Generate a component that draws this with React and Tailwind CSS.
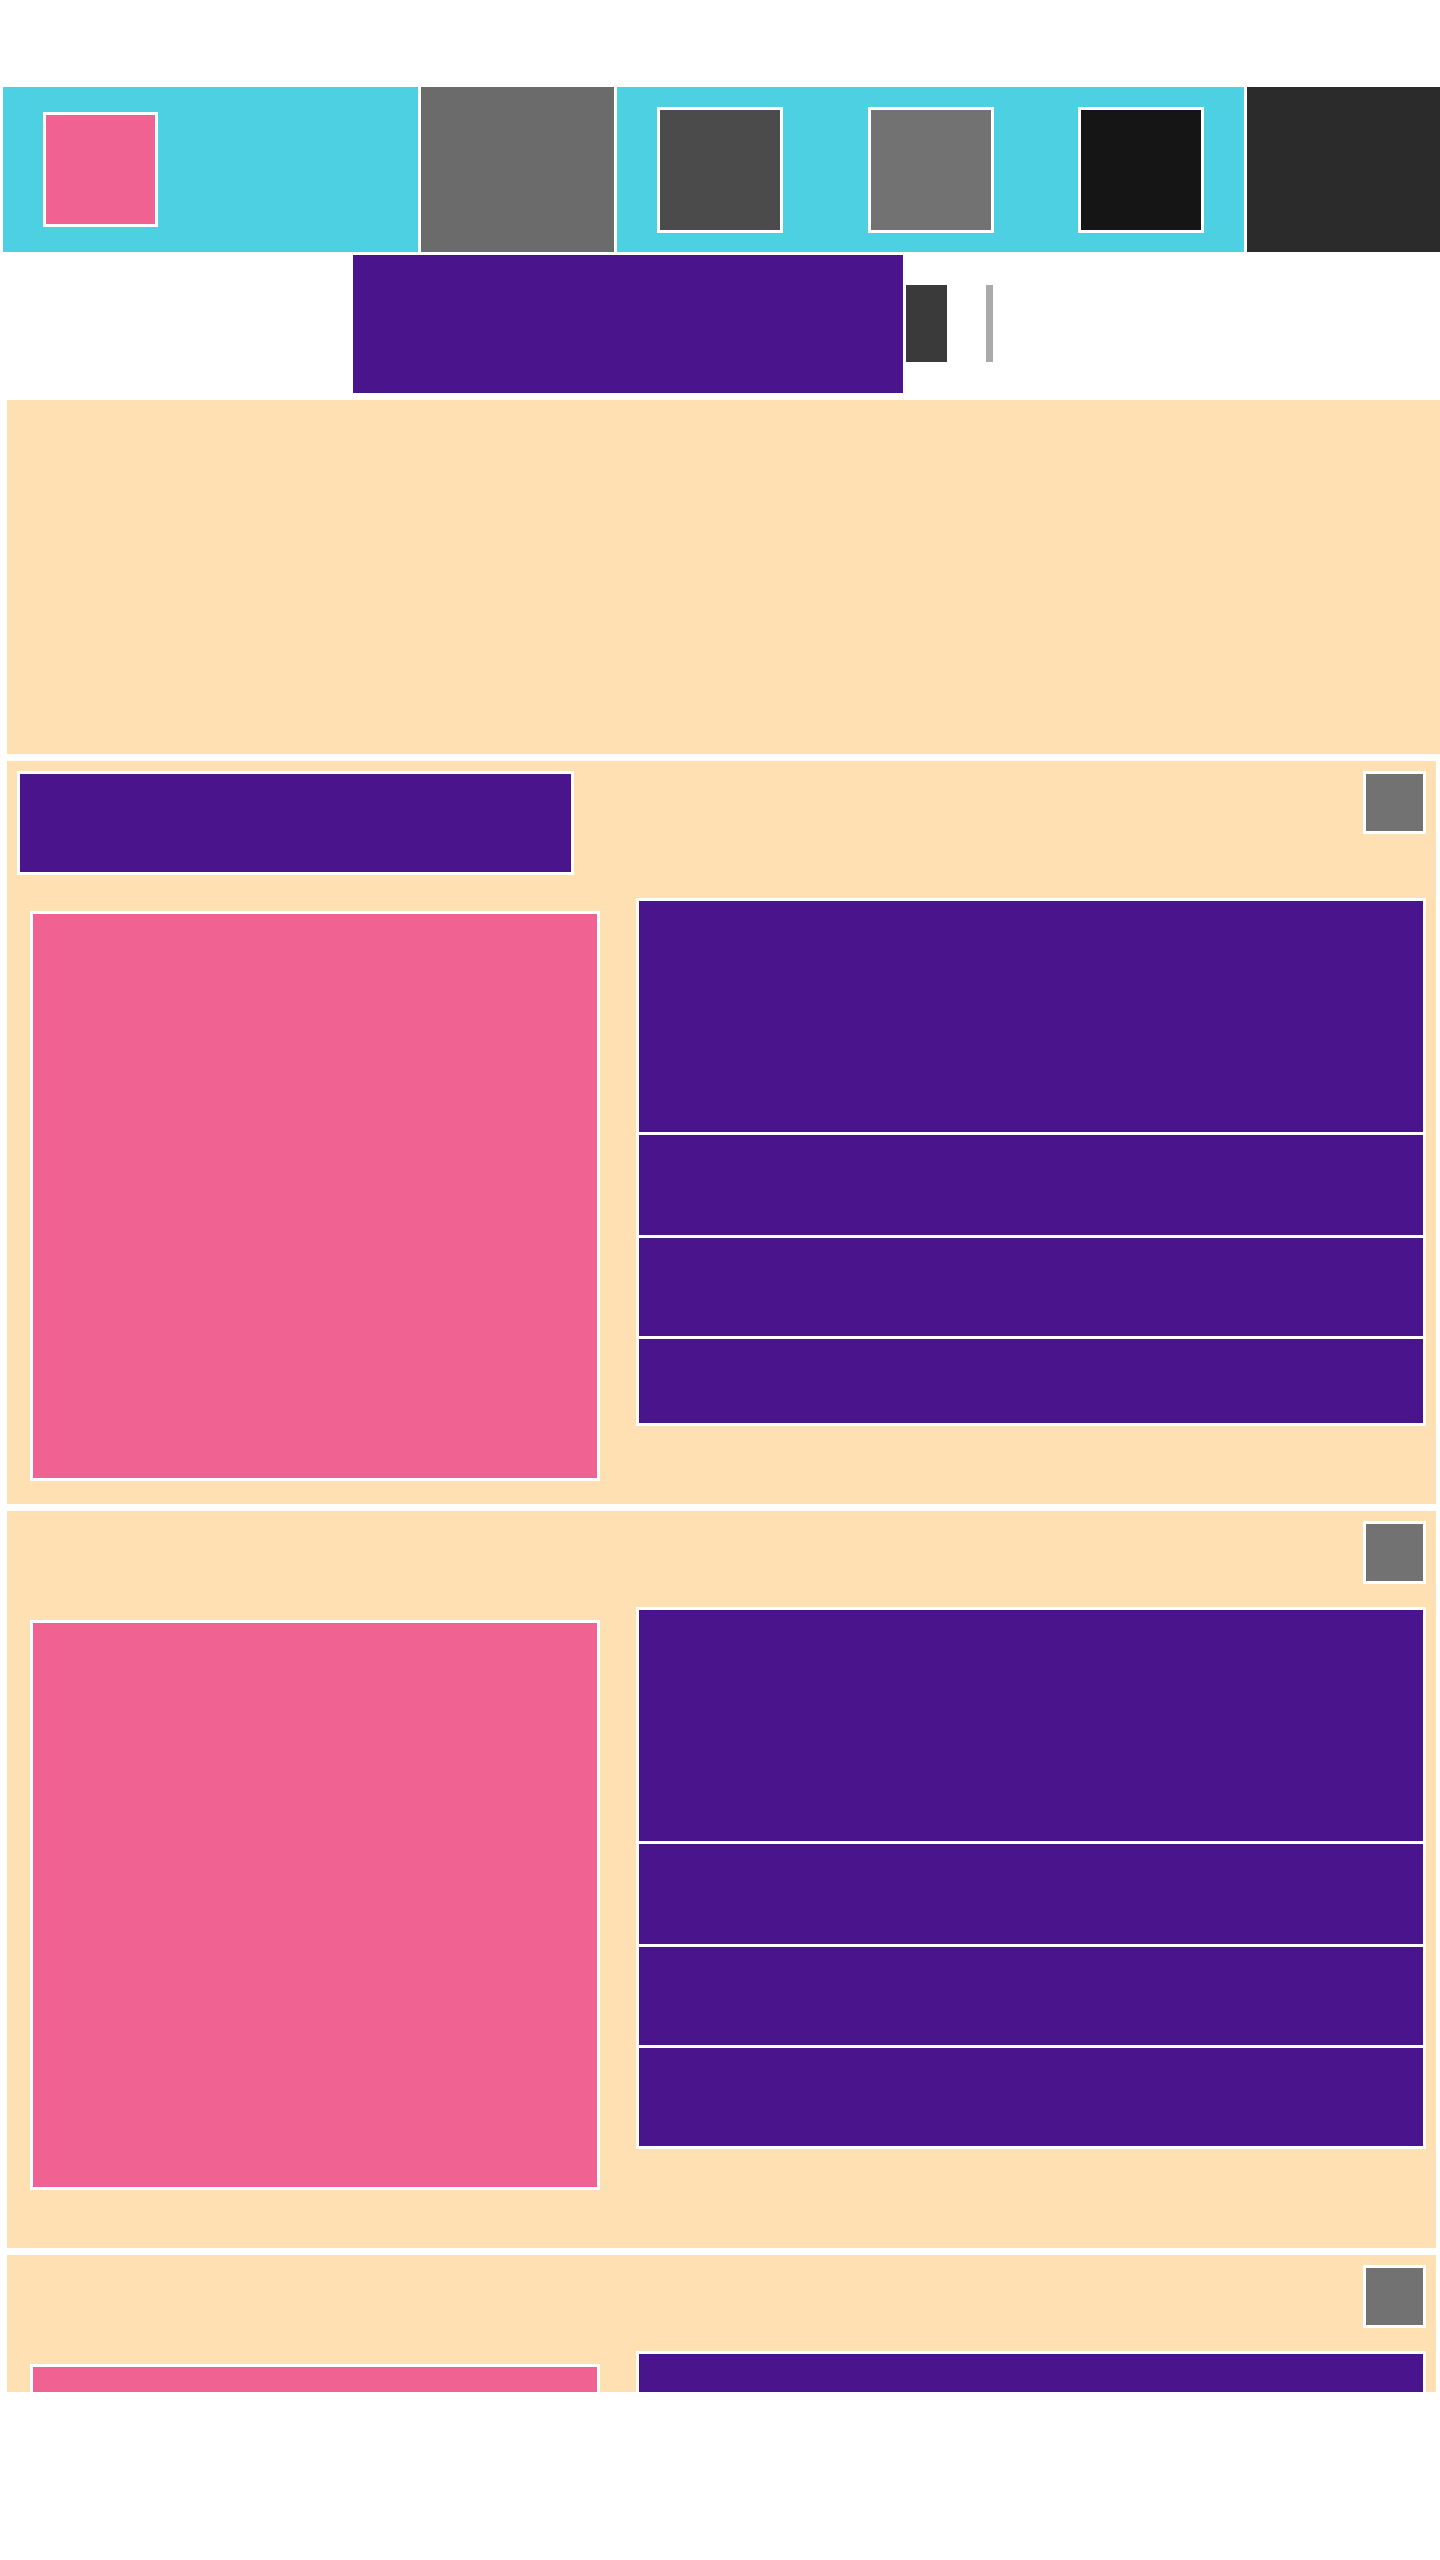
export default function App() {
  const Section = ({ title, heights, h }) => (
    <div className={`w-[1429px] bg-[#ffe0b2] p-[10px] shrink-0 ${h}`}>
      <div className="flex justify-between items-start">
        {title ? (
          <div className="w-[557px] h-[104px] border-[3px] border-white bg-[#4a148c]" />
        ) : (
          <div />
        )}
        <div className="w-[63px] h-[63px] border-[3px] border-white bg-[#727272]" />
      </div>
      <div className="mt-[23px] flex gap-[23px] items-start">
        <div className="p-[13px]">
          <div className="w-[570px] h-[570px] border-[3px] border-white bg-[#f06292]" />
        </div>
        <div className="w-[790px] bg-white p-[3px] flex flex-col gap-[3px]">
          {heights.map((hh, i) => (
            <div key={i} className="bg-[#4a148c]" style={{ height: hh }} />
          ))}
        </div>
      </div>
    </div>
  );

  return (
    <div className="w-[1440px] h-[2392px] overflow-hidden bg-white pt-[87px]">
      <div className="flex gap-[3px] h-[165px] pl-[3px]">
        <div className="w-[415px] bg-[#4dd0e1] flex items-center pl-[40px]">
          <div className="w-[115px] h-[115px] border-[3px] border-white bg-[#f06292]" />
        </div>
        <div className="w-[193px] bg-[#6b6b6b]" />
        <div className="w-[627px] bg-[#4dd0e1] flex items-center justify-between px-[40px]">
          <div className="w-[126px] h-[126px] border-[3px] border-white bg-[#4b4b4b]" />
          <div className="w-[126px] h-[126px] border-[3px] border-white bg-[#727272]" />
          <div className="w-[126px] h-[126px] border-[3px] border-white bg-[#151515]" />
        </div>
        <div className="flex-1 bg-[#2b2b2b]" />
      </div>
      <div className="mt-[3px] h-[138px] flex items-start">
        <div className="ml-[353px] w-[550px] h-[138px] bg-[#4a148c]" />
        <div className="ml-[3px] mt-[30px] w-[41px] h-[77px] bg-[#3a3a3a]" />
        <div className="ml-[39px] mt-[30px] w-[7px] h-[77px] bg-[#aaaaaa]" />
      </div>
      <div className="mt-[7px] ml-[7px] flex flex-col gap-[7px]">
        <div className="w-[1433px] h-[354px] bg-[#ffe0b2] shrink-0" />
        <Section title heights={[231, 100, 98, 84]} h="h-[743px]" />
        <Section heights={[231, 100, 98, 98]} h="h-[737px]" />
        <Section heights={[231, 100, 98, 98]} h="h-[737px]" />
      </div>
    </div>
  );
}
